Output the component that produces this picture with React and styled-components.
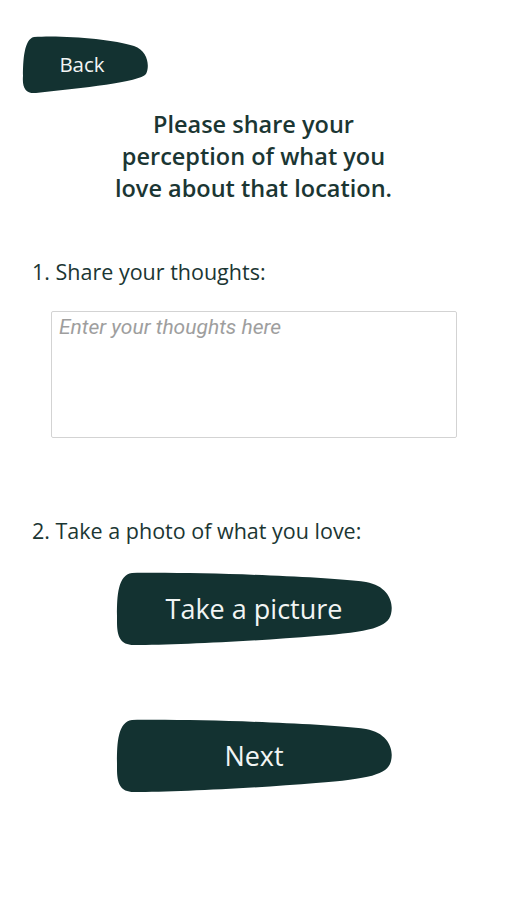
import React, { useState } from "react";
import styled, { createGlobalStyle } from "styled-components";

const GlobalStyle = createGlobalStyle`
  body {
    margin: 0;
    background: #ffffff;
    font-family: "Open Sans", "Noto Sans", sans-serif;
  }
`;

const INK = "#1b3633";
const FILL = "#133231";

// blob outlines, drawn in each button's own pixel box
const BACK_BLOB =
  "M 12 1 C 40 -1, 90 3, 112 10 C 126 15, 128 30, 124 38 C 118 46, 60 52, 14 57 C 4 58, 0 52, 1 40 C 1 25, 2 3, 12 1 Z";
const WIDE_BLOB =
  "M 16 1 C 80 0, 200 4, 250 10 C 272 14, 278 30, 275 42 C 272 55, 255 60, 200 64 C 140 69, 60 73, 18 73 C 4 73, 1 64, 1 50 C 1 30, 0 3, 16 1 Z";

function BlobButton({ label, path, w, h, size, shift = 0, onClick }) {
  return (
    <Blob $w={w} $h={h} $size={size} $shift={shift} onClick={onClick}>
      <svg viewBox={`0 0 ${w} ${h}`} preserveAspectRatio="none" aria-hidden="true">
        <path d={path} fill={FILL} />
      </svg>
      <span>{label}</span>
    </Blob>
  );
}

export default function App() {
  const [thoughts, setThoughts] = useState("");

  return (
    <>
      <GlobalStyle />
      <Page>
        <TopBar>
          <BlobButton label="Back" path={BACK_BLOB} w={128} h={58} size={20.5} shift={-8} />
        </TopBar>
        <Heading>Please share your perception of what you love about that location.</Heading>

        <Question>1. Share your thoughts:</Question>
        <Thoughts
          placeholder="Enter your thoughts here"
          value={thoughts}
          onChange={(e) => setThoughts(e.target.value)}
        />

        <Question $gap={79}>2. Take a photo of what you love:</Question>
        <Actions>
          <BlobButton label="Take a picture" path={WIDE_BLOB} w={277} h={74} size={27} />
          <BlobButton label="Next" path={WIDE_BLOB} w={277} h={74} size={27} />
        </Actions>
      </Page>
    </>
  );
}

const Page = styled.div`
  display: flex;
  flex-direction: column;
  min-height: 900px;
  box-sizing: border-box;
  padding: 36px 0 0;
`;

const TopBar = styled.div`
  display: flex;
  padding-left: 22px;
`;

const Blob = styled.button`
  position: relative;
  display: flex;
  align-items: center;
  justify-content: center;
  width: ${(p) => p.$w}px;
  height: ${(p) => p.$h}px;
  padding: 0;
  border: none;
  background: transparent;
  cursor: pointer;
  color: #f2f5f4;
  font-family: "Open Sans", "Noto Sans", sans-serif;
  font-size: ${(p) => p.$size}px;

  svg {
    position: absolute;
    inset: 0;
    width: 100%;
    height: 100%;
  }

  span {
    position: relative;
    margin-top: -2px;
    margin-left: ${(p) => p.$shift}px;
  }
`;

const Heading = styled.h1`
  margin: 14px auto 0;
  max-width: 300px;
  text-align: center;
  font-size: 23.5px;
  line-height: 32px;
  font-weight: 600;
  color: ${INK};
`;

const Question = styled.p`
  margin: ${(p) => p.$gap || 54}px 0 0 32px;
  font-size: 21.5px;
  line-height: 28px;
  color: ${INK};
`;

const Thoughts = styled.textarea`
  margin: 25px 0 0 51px;
  width: 406px;
  height: 127px;
  box-sizing: border-box;
  padding: 3px 7px;
  border: 1px solid #d3d3d3;
  border-radius: 2px;
  resize: none;
  font-family: Roboto, "Liberation Sans", sans-serif;
  font-size: 21px;
  color: #333;
  outline: none;

  &::placeholder {
    color: #9e9e9e;
    font-style: italic;
  }
`;

const Actions = styled.div`
  display: flex;
  flex-direction: column;
  align-items: center;
  gap: 73px;
  margin-top: 27px;
  padding-left: 1px;
`;
